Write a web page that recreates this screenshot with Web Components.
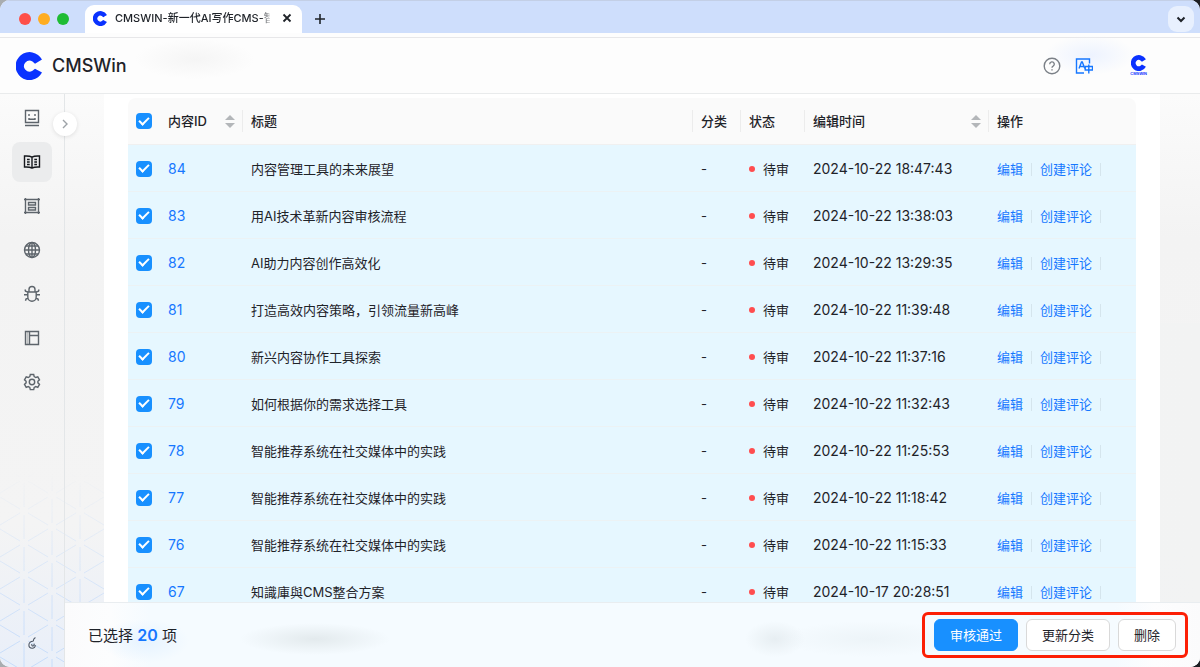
<!DOCTYPE html>
<html lang="zh-CN">
<head>
<meta charset="utf-8">
<meta name="viewport" content="width=device-width, initial-scale=1">
<title>CMSWIN-新一代AI写作CMS</title>
<style>
html, body { margin: 0; height: 100%; }
body { background: linear-gradient(90deg, #a9adb0, #1d1f24); font-family: Inter, "Noto Sans CJK SC", sans-serif; font-size: 13px; line-height: 20px; color: #1f2329; }
</style>
</head>
<body>
<browser-window></browser-window>

<script>
const define = (name, html, setup) => {
  const template = document.createElement('template');
  template.innerHTML = html;
  customElements.define(name, class extends HTMLElement {
    constructor() {
      super();
      this.attachShadow({ mode: 'open' }).append(template.content.cloneNode(true));
    }
    connectedCallback() { if (setup) setup(this, this.shadowRoot); }
  });
};

/* Brand mark: an open ring with chamfered ends */
define('brand-mark', `
<style>
:host { display: block; width: 26px; height: 28px; }
svg { display: block; width: 100%; height: 100%; }
</style>
<svg viewBox="0 0 26 28" aria-hidden="true"><path fill="#0a32ff" d="M26 7.600 L19 11.800 L16.500 9.500 A5.500 5.500 0 1 0 16.500 18.800 L19 16.800 L26 20.600 A14 14 0 1 1 26 7.600Z"/></svg>
`);

const ICONS = {
  robot: '<path d="M2.500 1.500h13v12h-13zM2 16.500h14"/><path d="M6 5v2M12 5v2M6 9v1.300h6V9"/>',
  book: '<path d="M9 4.200C7.500 3.200 5 2.800 1.500 3v11c3-.2 5.500 0 7.500 1 2-1 4.500-1.200 7.500-1V3C13 2.800 10.500 3.200 9 4.200V15M4 6.500h2.700M4 9h2.700M4 11.500h2.700M11.300 6.500H14M11.300 9H14M11.300 11.500H14"/>',
  form: '<path d="M2.500 2.500h13v13h-13zM5.500 5.500h7v2.500h-7zM5.500 10.500h7v2.500h-7zM1 2.500h1.500V1M15.500 1v1.500H17M1 15.500h1.500V17M17 15.500h-1.500V17"/>',
  globe: '<circle cx="9" cy="9" r="7.500"/><ellipse cx="9" cy="9" rx="3.500" ry="7.500"/><path d="M9 1.500v15M1.500 9h15M2.700 5h12.600M2.700 13h12.600"/>',
  bug: '<path d="M4.800 7h8.400v5a4.200 4.200 0 0 1-8.400 0zM6 7V4.500a3 3 0 0 1 6 0V7M1 9.800H4.800M13.200 9.800H17M2 4.500 2.500 6.200 4.800 7M16 4.500 15.500 6.200 13.200 7M2.500 15.800 3 14l2.200-1M15.500 15.800 15 14l-2.200-1"/>',
  layout: '<path d="M2.500 2.500h13v13h-13zM6.500 2.500v13M6.500 6.500h9"/><path d="M4.500 3v12" stroke-opacity=".35"/>',
  gear: '<path d="M7.300 1.500h3.400l.5 2.100 1.600.9 2-.7 1.700 3-1.600 1.400v1.700l1.600 1.400-1.700 3-2-.7-1.600.9-.5 2.100H7.300l-.5-2.100-1.600-.9-2 .7-1.700-3 1.600-1.400V8.200L1.500 6.800l1.700-3 2 .7 1.600-.9z"/><circle cx="9" cy="9" r="2.700"/>',
  help: '<circle cx="9" cy="9" r="7.800"/><path d="M6.700 7.200a2.300 2.300 0 1 1 3.400 2c-.8.400-1.100.8-1.100 1.600"/><path d="M9 12.300v1.300"/>',
  translate: '<path d="M14.500 6.500V2H1.500v14H9M4 11.500 6.500 5h.8l2.500 6.500M5 9.500h3.800"/><path d="M10.200 9.500h7.300v3.500h-7.300zM13.800 7.500v9"/>',
  chevronRight: '<path d="m7 5 4 4-4 4"/>',
  chevronDown: '<path stroke-width="2" d="m5.500 7.500 3.500 3.500 3.500-3.500"/>',
  close: '<path stroke-width="1.800" d="m5.500 5.500 7 7M12.500 5.500l-7 7"/>',
  plus: '<path stroke-width="1.600" d="M9 4v10M4 9h10"/>',
  pear: '<path stroke-width="1.100" d="M10.500 7.300C7.800 6.900 5.900 8.800 5.900 11c0 2 1.500 3.200 3.300 3.200 1.900 0 3.200-1.200 3.100-3.100M8.800 10.200c-.3 1.300.5 2 1.400 1.800.9-.2 1.200-1.200.8-2.400M10.300 7c0-1.300.7-2.600 2.100-3.500"/>'
};

define('ui-icon', `
<style>
:host { display: inline-block; width: 18px; height: 18px; flex: none; }
svg { display: block; width: 100%; height: 100%; fill: none; stroke: currentColor; stroke-width: 1.400; }
</style>
<svg viewBox="0 0 18 18" aria-hidden="true"></svg>
`, (host, root) => { root.querySelector('svg').innerHTML = ICONS[host.getAttribute('name')]; });

define('tab-strip', `
<style>
:host { display: flex; align-items: center; height: 33px; box-sizing: border-box; background: #cedefc; padding: 0 6px 0 19px; border-top: 1px solid #c3cfe6; }
.lights { display: flex; gap: 7px; margin-top: 4px; }
.lights i { width: 12px; height: 12px; border-radius: 50%; background: #fe4f48; }
.lights i:nth-child(2) { background: #ffad21; }
.lights i:nth-child(3) { background: #1fbc33; }
.tab { display: flex; align-items: center; align-self: flex-end; box-sizing: border-box; width: 217px; height: 28px; margin-left: 16px; padding: 0 6px 2px 8px; background: #fff; border-radius: 9px 9px 0 0; }
.tab brand-mark { width: 14px; height: 15px; }
.title { flex: 1; min-width: 0; margin-left: 8px; font-size: 11px; font-weight: 500; color: #1f2329; white-space: nowrap; -webkit-mask-image: linear-gradient(90deg, #000 145px, #0000 158px); mask-image: linear-gradient(90deg, #000 145px, #0000 158px); }
button { display: grid; place-items: center; padding: 0; border: 0; background: none; color: #1f2329; }
.close { margin-left: 8px; }
.add { margin: 4px 0 0 9px; }
.more { width: 26px; height: 26px; margin: 3px 0 0 auto; border-radius: 9px; background: #e8f0fe; }
</style>
<div class="lights"><i></i><i></i><i></i></div>
<div class="tab"><brand-mark></brand-mark><span class="title">CMSWIN-新一代AI写作CMS-智</span><button class="close" aria-label="关闭"><ui-icon name="close"></ui-icon></button></div>
<button class="add" aria-label="新标签页"><ui-icon name="plus"></ui-icon></button>
<button class="more" aria-label="更多"><ui-icon name="chevronDown"></ui-icon></button>
`);

define('app-header', `
<style>
:host { display: flex; align-items: center; height: 61px; box-sizing: border-box; padding: 5px 53px 0 16px; border-bottom: 1px solid #e9ebec;
  background: radial-gradient(ellipse 60px 20px at 195px 26px, #f5f5f5, #f5f5f500),
    radial-gradient(ellipse 45px 20px at calc(100% - 110px) 22px, #edf3ff, #edf3ff00),
    linear-gradient(#e7e7e9, #e7e7e9) 0 4px / 100% 1px no-repeat, #fdfdfd; }
strong { margin-left: 10px; font-size: 18px; font-weight: 500; }
.tools { display: flex; align-items: center; margin-left: auto; }
button { display: grid; place-items: center; border: 0; background: none; padding: 0; color: #7b8087; }
.lang { color: #1677ff; margin-left: 14px; }
.user { justify-items: center; margin-left: 37px; color: #0a32ff; font-size: 4px; line-height: 5px; font-weight: 700; }
.user brand-mark { width: 15px; height: 16px; }
</style>
<brand-mark></brand-mark><strong>CMSWin</strong>
<div class="tools">
<button aria-label="帮助"><ui-icon name="help"></ui-icon></button>
<button class="lang" aria-label="语言"><ui-icon name="translate"></ui-icon></button>
<button class="user" aria-label="账户"><brand-mark></brand-mark><span>CMSWIN</span></button>
</div>
`);

define('side-nav', `
<style>
:host { position: relative; z-index: 1; display: flex; flex-direction: column; align-items: center; box-sizing: border-box; width: 65px; flex: none; padding: 4px 1px 15px 0; border-right: 1px solid #e3e6e8; }
nav { display: flex; flex-direction: column; gap: 4px; }
a { display: grid; place-items: center; width: 40px; height: 40px; border-radius: 8px; color: #5d646b; }
a.on { background: #ebeced; color: #15181c; }
.pear { margin-top: auto; color: #4b5563; }
.toggle { position: absolute; left: 53px; top: 18px; width: 24px; height: 24px; padding: 0; display: grid; place-items: center; border: 0; border-radius: 50%; background: #fff; color: #9da2a7; box-shadow: 0 1px 4px #0000001c; }
</style>
<nav>
<a href="#ai" aria-label="AI"><ui-icon name="robot"></ui-icon></a>
<a href="#content" class="on" aria-label="内容"><ui-icon name="book"></ui-icon></a>
<a href="#form" aria-label="表单"><ui-icon name="form"></ui-icon></a>
<a href="#site" aria-label="站点"><ui-icon name="globe"></ui-icon></a>
<a href="#spider" aria-label="采集"><ui-icon name="bug"></ui-icon></a>
<a href="#layout" aria-label="模板"><ui-icon name="layout"></ui-icon></a>
<a href="#settings" aria-label="设置"><ui-icon name="gear"></ui-icon></a>
</nav>
<ui-icon class="pear" name="pear"></ui-icon>
<button class="toggle" aria-label="展开"><ui-icon name="chevronRight"></ui-icon></button>
`);

const ROWS = [
  [84, '内容管理工具的未来展望', '2024-10-22 18:47:43'],
  [83, '用AI技术革新内容审核流程', '2024-10-22 13:38:03'],
  [82, 'AI助力内容创作高效化', '2024-10-22 13:29:35'],
  [81, '打造高效内容策略，引领流量新高峰', '2024-10-22 11:39:48'],
  [80, '新兴内容协作工具探索', '2024-10-22 11:37:16'],
  [79, '如何根据你的需求选择工具', '2024-10-22 11:32:43'],
  [78, '智能推荐系统在社交媒体中的实践', '2024-10-22 11:25:53'],
  [77, '智能推荐系统在社交媒体中的实践', '2024-10-22 11:18:42'],
  [76, '智能推荐系统在社交媒体中的实践', '2024-10-22 11:15:33'],
  [67, '知識庫與CMS整合方案', '2024-10-17 20:28:51']
];

define('content-table', `
<style>
:host { display: block; }
table { width: 100%; table-layout: fixed; border-collapse: separate; border-spacing: 0; }
th, td { box-sizing: border-box; height: 47px; padding: 0 8px; text-align: left; white-space: nowrap; border-bottom: 1px solid #f0f0f0; }
th { background: #fafafa linear-gradient(#ececec, #ececec) 100% 50% / 1px 22px no-repeat; font-weight: 500; }
th:first-child, th:last-child { background-image: none; }
th:first-child { border-top-left-radius: 8px; }
th:last-child { border-top-right-radius: 8px; }
td { padding-top: 1px; background: #e6f7ff; border-color: #ecf2f4; }
.id { width: 83px; } .check { width: 32px; } .cat { width: 48px; } .state { width: 64px; } .time { width: 184px; } .ops { width: 147px; }
.head { display: flex; align-items: center; justify-content: space-between; }
.sort { display: grid; gap: 3px; }
.sort i { border: 5px solid transparent; border-top: 0; border-bottom-color: #b3b6b9; }
.sort i + i { border: 5px solid transparent; border-bottom: 0; border-top-color: #b3b6b9; }
input { appearance: none; display: grid; place-items: center; width: 16px; height: 16px; margin: 0; border-radius: 4px; background: #1890ff; }
input::after { content: ""; width: 4px; height: 8px; margin-top: -3px; border: solid #fff; border-width: 0 2px 2px 0; transform: rotate(45deg); }
a { color: #1677ff; text-decoration: none; }
.num { font-size: 14px; padding-top: 2px; }
.status { display: flex; align-items: center; gap: 8px; }
.status::before { content: ""; width: 6px; height: 6px; border-radius: 50%; background: #ff4d4f; }
.actions { display: flex; align-items: center; }
.actions a::after { content: ""; display: inline-block; width: 1px; height: 13px; margin: 0 8px; background: #d5e5ed; vertical-align: -2px; }
</style>
<table>
<thead><tr>
<th class="check"><input type="checkbox" checked aria-label="全选"></th>
<th class="id"><div class="head">内容ID<span class="sort"><i></i><i></i></span></div></th>
<th>标题</th><th class="cat">分类</th><th class="state">状态</th>
<th class="time"><div class="head">编辑时间<span class="sort"><i></i><i></i></span></div></th>
<th class="ops">操作</th>
</tr></thead>
<tbody></tbody>
</table>
`, (host, root) => {
  root.querySelector('tbody').innerHTML = ROWS.map(([id, title, time]) => `<tr>
<td><input type="checkbox" checked aria-label="选择 ${id}"></td>
<td class="num"><a href="#${id}">${id}</a></td><td>${title}</td><td>-</td>
<td><span class="status">待审</span></td><td class="num">${time}</td>
<td><span class="actions"><a href="#edit-${id}">编辑</a><a href="#comment-${id}">创建评论</a></span></td></tr>`).join('');
});

define('ui-button', `
<style>
:host { display: block; }
button { display: block; height: 32px; padding: 0 15px; border: 1px solid #d9d9d9; border-radius: 6px; background: #fff; color: #1f2329; font: inherit; white-space: nowrap; }
:host([primary]) button { background: #1890ff; border-color: #1890ff; color: #fff; }
</style>
<button><slot></slot></button>
`);

define('bulk-bar', `
<style>
:host { display: flex; align-items: center; box-sizing: border-box; height: 65px; padding: 0 12px 0 23px; border-top: 1px solid #e9edf0; font-size: 15px;
  background: radial-gradient(ellipse 75px 16px at 250px 36px, #e3eaed, #e3eaed00),
    radial-gradient(ellipse 30px 18px at 710px 36px, #e7eef2, #e7eef200),
    radial-gradient(ellipse 90px 18px at 805px 36px, #edf4f8, #edf4f800),
    radial-gradient(ellipse 44px 22px at 80px 38px, #e6f3ff, #e6f3ff00),
    linear-gradient(90deg, #fbfbfc 0, #fcfdfe 45px, #f5fbff 85px, #f5fbff calc(100% - 85px), #fdfdfe calc(100% - 45px), #fbfbfc); }
b { color: #1677ff; font-weight: 600; font-size: 16px; }
.buttons { display: flex; gap: 8px; margin-left: auto; padding: 4px 9px; border: 3px solid #fc1f05; border-radius: 6px; font-size: 13px; }
</style>
<span>已选择 <b>20</b> 项</span>
<div class="buttons"><ui-button primary>审核通过</ui-button><ui-button>更新分类</ui-button><ui-button>删除</ui-button></div>
`);

/* Faint triangular lattice in the lower left corner of the workspace */
define('lattice-backdrop', `
<style>
:host { position: absolute; inset: 0; background: linear-gradient(90deg, #f2f3f300 50%, #f2f3f3) 0 100% / 100% 60% no-repeat, linear-gradient(#fbfbfb, #f3f3f3 25%, #f4f4f4 75%, #e9eff9); }
svg { display: block; width: 105px; height: 100%; -webkit-mask-image: linear-gradient(transparent 66%, #000); mask-image: linear-gradient(transparent 66%, #000); }
</style>
<svg aria-hidden="true"><defs><pattern id="p" width="56" height="32" patternUnits="userSpaceOnUse" x="24" y="1">
<path fill="none" stroke="#c6dcfa" d="M0 4v24M56 4v24M28 0v12M28 20v12M4 2l20 12M4 30l20-12M32 14l20-12M32 18l20 12"/></pattern></defs>
<rect width="100%" height="100%" fill="url(#p)"/></svg>
`);

define('browser-window', `
<style>
:host { display: flex; flex-direction: column; height: 100vh; overflow: hidden; border-radius: 10px; background: #fff; }
tab-strip, app-header { flex: none; }
.work { position: relative; display: flex; flex: 1; min-height: 0; }
.column { position: relative; display: flex; flex-direction: column; flex: 1; min-width: 0; }
.scroll { flex: 1; min-height: 0; overflow: hidden; padding: 0 40px 0 39px; }
.panel { min-height: 100%; box-sizing: border-box; padding: 4px 24px 0; background: #fff; }
</style>
<tab-strip></tab-strip>
<app-header></app-header>
<div class="work">
<lattice-backdrop></lattice-backdrop>
<side-nav></side-nav>
<div class="column">
<div class="scroll"><div class="panel"><content-table></content-table></div></div>
<bulk-bar></bulk-bar>
</div>
</div>
`);
</script>
</body>
</html>
